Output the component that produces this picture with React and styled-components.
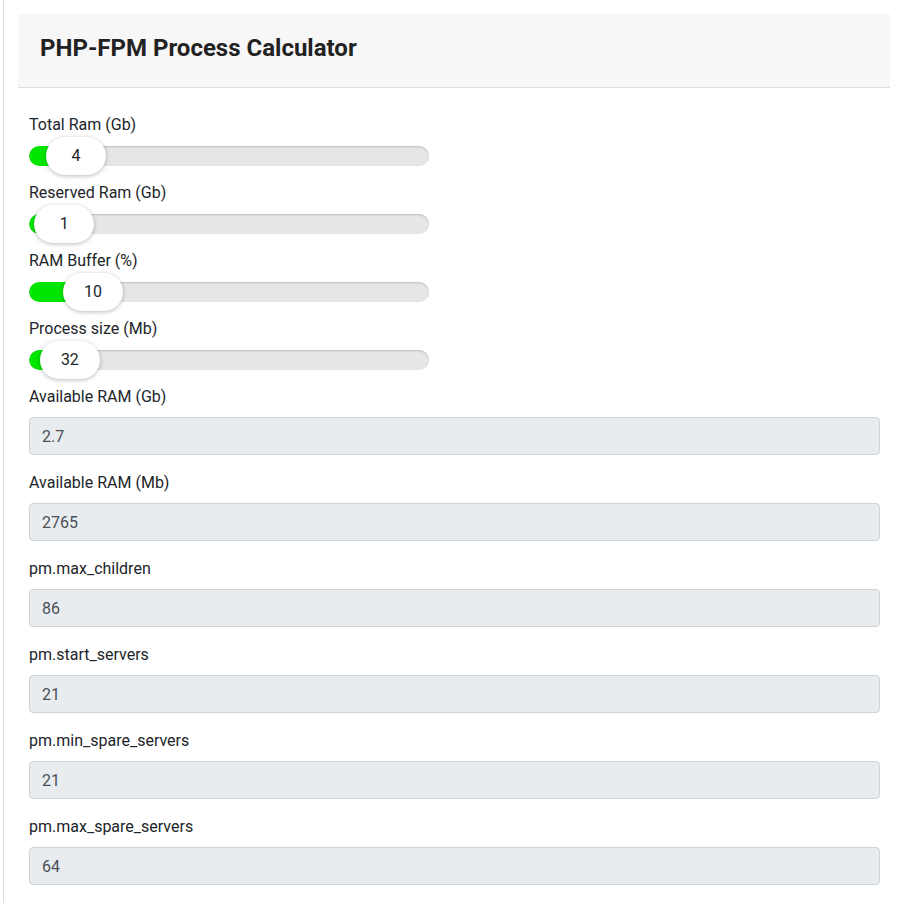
import React, { useState } from "react";
import styled, { createGlobalStyle } from "styled-components";

const GlobalStyle = createGlobalStyle`
  html, body {
    margin: 0;
    padding: 0;
    background: #fff;
    overflow: hidden;
  }
  body {
    font-family: Roboto, "Liberation Sans", Arial, sans-serif;
    font-size: 16px;
    line-height: 24px;
    color: #212529;
  }
  * { box-sizing: border-box; }
`;

const Page = styled.div`
  margin-left: 3px;
  border-left: 1px solid #dcdcdc;
  padding: 14px 11px 0 14px;
  min-height: 903px;
`;

const Card = styled.div`
  background: #fff;
`;

const CardHeader = styled.div`
  background: #f7f7f7;
  border-bottom: 1px solid #dedede;
  padding: 0 22px 5px;
  height: 74px;
  display: flex;
  align-items: center;
`;

const Title = styled.h3`
  margin: 0;
  font-size: 24px;
  font-weight: 700;
  line-height: 28px;
  color: #222;
`;

const CardBody = styled.div`
  padding: 25px 10px 0 11px;
`;

const Label = styled.label`
  display: block;
  font-size: 16px;
  line-height: 24px;
  color: #212529;
`;

const SliderBlock = styled.div`
  margin-bottom: 6px;
`;

const SliderWrap = styled.div`
  position: relative;
  width: 400px;
  height: 38px;
  display: flex;
  align-items: center;
`;

const Track = styled.div`
  width: 100%;
  height: 20px;
  border-radius: 10px;
  background: #e6e6e6;
  box-shadow: inset 0 1px 2px rgba(0, 0, 0, 0.18);
  overflow: hidden;
`;

const Fill = styled.div`
  height: 100%;
  background: #00e600;
  border-radius: 10px 0 0 10px;
`;

const Thumb = styled.div`
  position: absolute;
  top: 0;
  width: 60px;
  height: 38px;
  border-radius: 19px;
  background: #fff;
  box-shadow: 0 1px 4px rgba(0, 0, 0, 0.28);
  display: flex;
  align-items: center;
  justify-content: center;
  font-size: 16px;
  color: #212529;
  cursor: grab;
  user-select: none;
`;

const FormGroup = styled.div`
  margin-bottom: 16px;
`;

const FieldLabel = styled(Label)`
  margin-bottom: 8px;
`;

const ReadOnlyInput = styled.input`
  display: block;
  width: 100%;
  height: 38px;
  padding: 6px 12px;
  font-family: inherit;
  font-size: 16px;
  line-height: 24px;
  color: #495057;
  background: #e9ecef;
  border: 1px solid #ced4da;
  border-radius: 4px;
  outline: none;
`;

const TRAVEL = 340;

function Slider({ label, value, min, max, onChange }) {
  const left = ((value - min) / (max - min)) * TRAVEL;

  const handleDown = (e) => {
    const rect = e.currentTarget.getBoundingClientRect();
    const move = (ev) => {
      const x = Math.min(Math.max(ev.clientX - rect.left - 30, 0), TRAVEL);
      onChange(Math.round(min + (x / TRAVEL) * (max - min)));
    };
    move(e);
    const up = () => {
      window.removeEventListener("pointermove", move);
      window.removeEventListener("pointerup", up);
    };
    window.addEventListener("pointermove", move);
    window.addEventListener("pointerup", up);
  };

  return (
    <SliderBlock>
      <Label>{label}</Label>
      <SliderWrap onPointerDown={handleDown}>
        <Track>
          <Fill style={{ width: left + 30 }} />
        </Track>
        <Thumb style={{ left }}>{value}</Thumb>
      </SliderWrap>
    </SliderBlock>
  );
}

function Field({ label, value }) {
  return (
    <FormGroup>
      <FieldLabel>{label}</FieldLabel>
      <ReadOnlyInput readOnly value={value} />
    </FormGroup>
  );
}

export default function App() {
  const [totalRam, setTotalRam] = useState(4);
  const [reservedRam, setReservedRam] = useState(1);
  const [buffer, setBuffer] = useState(10);
  const [processSize, setProcessSize] = useState(32);

  const availGb = Math.round((totalRam - reservedRam) * (1 - buffer / 100) * 10) / 10;
  const availMb = Math.round((totalRam - reservedRam) * (1 - buffer / 100) * 1024);
  const maxChildren = Math.floor(availMb / processSize);
  const startServers = Math.floor(maxChildren * 0.25);
  const minSpare = Math.floor(maxChildren * 0.25);
  const maxSpare = Math.floor(maxChildren * 0.75);

  return (
    <>
      <GlobalStyle />
      <Page>
        <Card>
          <CardHeader>
            <Title>PHP-FPM Process Calculator</Title>
          </CardHeader>
          <CardBody>
            <Slider label="Total Ram (Gb)" value={totalRam} min={0} max={80} onChange={setTotalRam} />
            <Slider label="Reserved Ram (Gb)" value={reservedRam} min={0} max={64} onChange={setReservedRam} />
            <Slider label="RAM Buffer (%)" value={buffer} min={0} max={100} onChange={setBuffer} />
            <Slider label="Process size (Mb)" value={processSize} min={0} max={1000} onChange={setProcessSize} />
            <Field label="Available RAM (Gb)" value={availGb} />
            <Field label="Available RAM (Mb)" value={availMb} />
            <Field label="pm.max_children" value={maxChildren} />
            <Field label="pm.start_servers" value={startServers} />
            <Field label="pm.min_spare_servers" value={minSpare} />
            <Field label="pm.max_spare_servers" value={maxSpare} />
          </CardBody>
        </Card>
      </Page>
    </>
  );
}
